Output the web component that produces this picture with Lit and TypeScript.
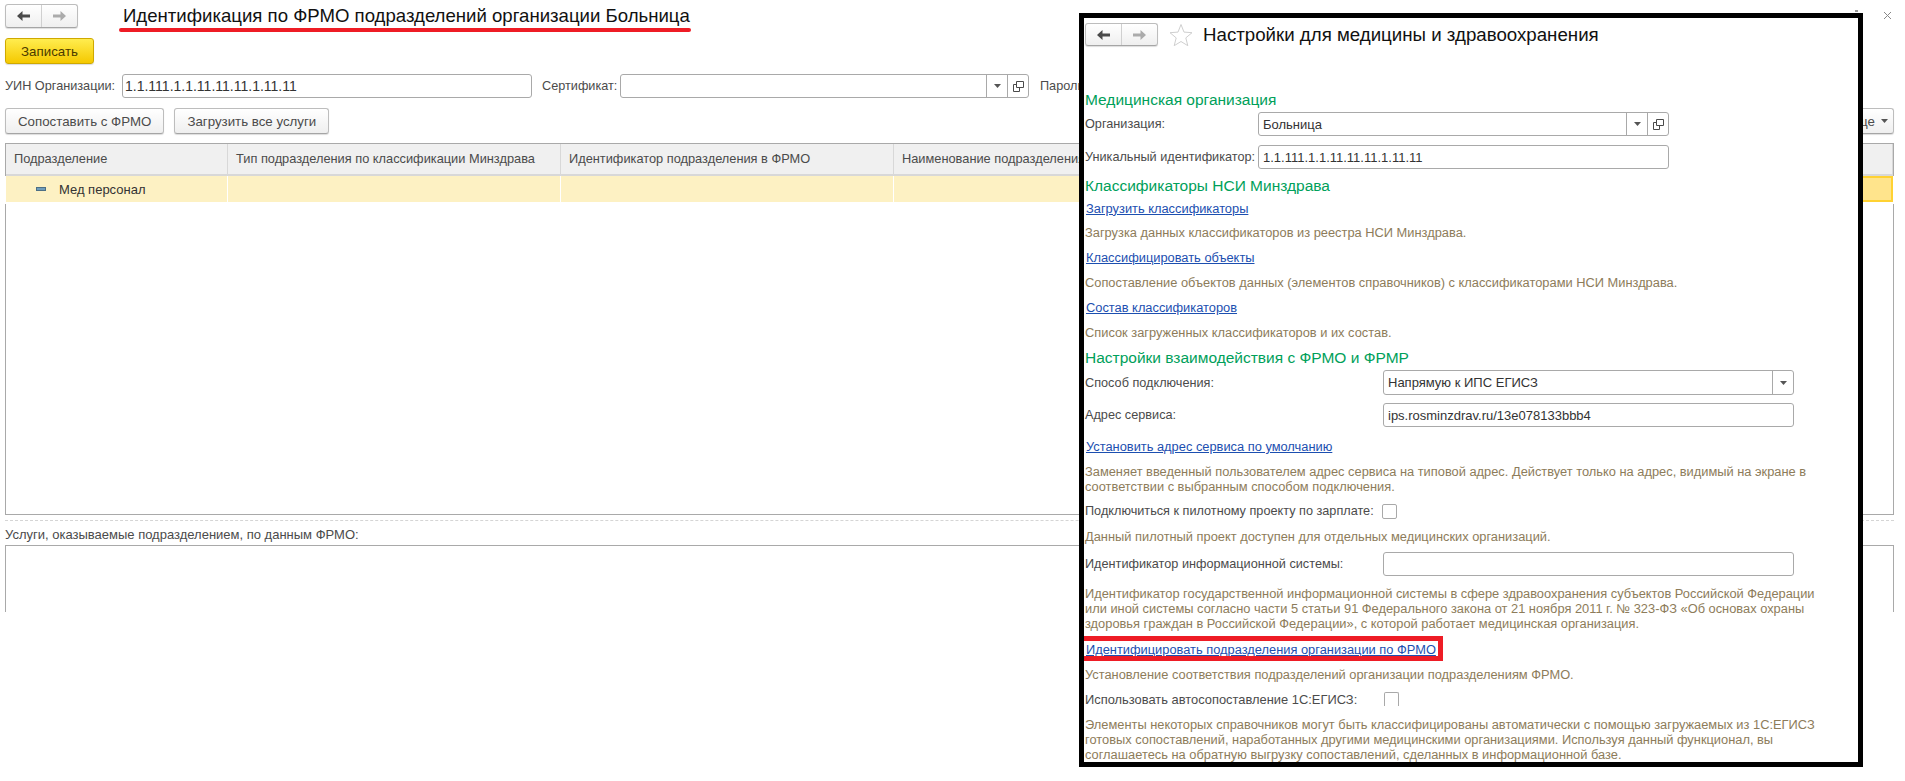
import { LitElement, html, css } from 'lit'
import { customElement } from 'lit/decorators.js'

const arrowLeft = html`<svg width="15" height="12" viewBox="0 0 15 12"><path d="M1 6l5.500-5v3.500H14v3H6.500V11z" fill="#4a4a4a"/></svg>`
const arrowRight = html`<svg width="15" height="12" viewBox="0 0 15 12"><path d="M14 6L8.500 1v3.500H1v3h7.500V11z" fill="#ababab"/></svg>`
const caret = html`<svg width="7" height="4" viewBox="0 0 7 4"><path d="M0 0h7L3.500 4z" fill="#555"/></svg>`
const openIcon = html`<svg width="11" height="11" viewBox="0 0 11 11" fill="none" stroke="#4a4a4a"><path d="M3.500.5h7v6h-7zM3.500 3.500H.5v7h6V7"/></svg>`
const star = html`<svg width="24" height="23" viewBox="0 0 24 23"><path d="M12 1.500l3 7.600 8 .6-6.200 5.200 2 7.800L12 18.500 5.200 22.700l2-7.800L1 9.700l8-.6z" fill="#fff" stroke="#cfcfcf"/></svg>`

@customElement('app-root')
export class AppRoot extends LitElement {
  static styles = css`
    :host {
      display: block;
      position: relative;
      height: 781px;
      overflow: hidden;
      background: #fff;
      font-family: "Liberation Sans", Arial, sans-serif;
      font-size: 13px;
      color: #4b4b4b;
    }
    .form {
      display: flex;
      flex-direction: column;
      height: 612px;
      overflow: hidden;
      padding: 4px 11px 0 5px;
      box-sizing: border-box;
    }
    .form > * {
      flex: none;
    }
    .titlebar {
      display: flex;
      align-items: center;
      height: 24px;
    }
    .nav {
      display: flex;
      flex: none;
      box-sizing: border-box;
      width: 73px;
      height: 24px;
      border: 1px solid #bdbdbd;
      border-bottom-color: #a5a5a5;
      border-radius: 3px;
      background: linear-gradient(#fff, #efefef);
      box-shadow: 0 1px 1px #ddd;
    }
    .nav span {
      flex: 1;
      display: flex;
      align-items: center;
      justify-content: center;
    }
    .nav span + span {
      border-left: 1px solid #d0d0d0;
    }
    .title {
      position: relative;
      margin-left: 45px;
      font-size: 18.6px;
      color: #111;
      white-space: nowrap;
    }
    .title::after {
      content: "";
      position: absolute;
      left: -4px;
      right: -1px;
      bottom: -5px;
      height: 4px;
      border-radius: 2px;
      background: #ee1c25;
    }
    .kebab {
      position: absolute;
      left: 1855px;
      top: 10px;
      width: 3px;
      height: 10px;
      background: repeating-linear-gradient(#999 0 2px, transparent 2px 4px);
    }
    .close {
      position: absolute;
      left: 1883px;
      top: 11px;
    }
    .btn {
      display: flex;
      align-items: center;
      justify-content: center;
      box-sizing: border-box;
      height: 26px;
      padding: 0 12px;
      border: 1px solid #bdbdbd;
      border-bottom-color: #a5a5a5;
      border-radius: 3px;
      background: linear-gradient(#fff, #efefef);
      box-shadow: 0 1px 1px #ddd;
      white-space: nowrap;
      font-size: 13.3px;
    }
    .save {
      align-self: flex-start;
      margin-top: 10px;
      width: 89px;
      padding: 0;
      background: linear-gradient(#ffed4f, #f5c900);
      border-color: #cfa900;
      color: #4a3a00;
    }
    .fields {
      display: flex;
      align-items: center;
      height: 24px;
      margin-top: 10px;
      white-space: nowrap;
      font-size: 12.7px;
    }
    .uin-label {
      flex: none;
      width: 117px;
    }
    .cert-label {
      flex: none;
      width: 88px;
      padding-left: 10px;
      box-sizing: border-box;
    }
    .input {
      display: flex;
      align-items: stretch;
      box-sizing: border-box;
      height: 24px;
      border: 1px solid #a9a9a9;
      border-radius: 3px;
      background: #fff;
      color: #333;
      flex: none;
    }
    .input .val {
      flex: 1;
      display: flex;
      align-items: center;
      padding-left: 4px;
      white-space: nowrap;
      overflow: hidden;
    }
    .input .cell {
      flex: none;
      width: 20px;
      display: flex;
      align-items: center;
      justify-content: center;
      border-left: 1px solid #a9a9a9;
    }
    .uin {
      width: 410px;
      font-size: 14px;
    }
    .uin .val {
      padding-left: 2px;
    }
    .cert {
      width: 409px;
      margin-right: 11px;
    }
    .actions {
      display: flex;
      gap: 10px;
      margin-top: 10px;
    }
    .actions .more {
      margin-left: auto;
      gap: 6px;
      padding: 0 5px 0 8px;
    }
    .table {
      display: grid;
      grid-template-columns: 222px 333px 333px 500px 1fr;
      grid-template-rows: 32px 28px 1fr;
      box-sizing: border-box;
      height: 372px;
      margin-top: 9px;
      border: 1px solid #a9a9a9;
    }
    .th {
      display: flex;
      align-items: center;
      padding: 0 0 2px 8px;
      background: #f0f0f0;
      border-right: 1px solid #d8d8d8;
      border-bottom: 2px solid #d8d8d8;
      white-space: nowrap;
      overflow: hidden;
      font-size: 12.8px;
    }
    .td {
      display: flex;
      align-items: center;
      box-sizing: border-box;
      margin-bottom: 2px;
      background: #fdf1c3;
      border-right: 1px solid #fff;
      color: #333;
      box-shadow: 0 1px 0 1px #fff, 0 2px 0 0 #e6e6e6;
    }
    .td.first {
      padding-left: 30px;
      gap: 13px;
    }
    .td.current {
      background: #ffe48c;
      border: 2px solid #ffd233;
    }
    .minus {
      width: 10px;
      height: 4px;
      background: #6f9dbb;
      border: 1px solid #4d6f85;
      box-sizing: border-box;
    }
    .split {
      height: 0;
      margin-top: 5px;
      border-top: 1px dashed #d5d5d5;
    }
    .services {
      margin-top: 6px;
      line-height: 16px;
    }
    .lower {
      margin-top: 2px;
      height: 100px;
      border: 1px solid #a9a9a9;
    }

    /* настройки поверх формы */
    .window {
      position: absolute;
      left: 1079px;
      top: 13px;
      box-sizing: border-box;
      width: 784px;
      height: 754px;
      border: 5px solid #000;
      background: #fff;
      overflow: hidden;
      padding: 5px 0 0 1px;
      font-size: 12.85px;
    }
    .winhead {
      display: flex;
      align-items: center;
      height: 23px;
    }
    .winhead .nav {
      height: 23px;
    }
    .star {
      flex: none;
      margin-left: 11px;
      display: flex;
    }
    .wintitle {
      margin-left: 10px;
      font-size: 18.7px;
      color: #111;
      white-space: nowrap;
    }
    .group {
      display: flex;
      align-items: center;
      height: 22px;
      font-size: 15.5px;
      color: #00a05a;
      white-space: nowrap;
    }
    .row {
      display: flex;
      align-items: center;
      white-space: nowrap;
      font-size: 12.7px;
    }
    .row .lbl {
      flex: none;
      width: 173px;
    }
    .row.wide .lbl {
      width: 298px;
    }
    .row .input {
      width: 411px;
      font-size: 13px;
    }
    .row.auto {
      font-size: 12.9px;
    }
    .row.auto .lbl {
      width: 299px;
    }
    .h24 { height: 24px; }
    .h25 { height: 25px; }
    .link {
      display: flex;
      align-items: center;
      height: 25px;
      padding-left: 1px;
      color: #1c4fb0;
      text-decoration: underline;
      white-space: nowrap;
    }
    .link.short {
      height: 22px;
      margin-bottom: 1px;
    }
    .desc {
      padding: 5px 0;
      line-height: 15px;
      color: #8d7c5a;
      white-space: nowrap;
    }
    .check {
      flex: none;
      box-sizing: border-box;
      width: 15px;
      height: 15px;
      border: 1px solid #a9a9a9;
      border-radius: 2px;
      background: #fff;
    }
    .check.near {
      margin-left: 8px;
    }
    .check.open {
      height: 14px;
      border-bottom: none;
      border-radius: 2px 2px 0 0;
    }
    .gap1 { margin-top: 1px; }
    .gap2 { margin-top: 2px; }
    .gap3 { margin-top: 3px; }
    .gap5 { margin-top: 5px; }
    .gap6 { margin-top: 6px; }
    .gap7 { margin-top: 7px; }
    .gap8 { margin-top: 8px; }
    .gap9 { margin-top: 9px; }
    .gap43 { margin-top: 43px; }
    .mark {
      position: absolute;
      left: -5px;
      top: 618px;
      box-sizing: border-box;
      width: 364px;
      height: 25px;
      border: 5px solid #ee1c25;
    }
  `

  protected override render() {
    return html`
      <div class="form">
        <div class="titlebar">
          <div class="nav"><span>${arrowLeft}</span><span>${arrowRight}</span></div>
          <div class="title">Идентификация по ФРМО подразделений организации Больница</div>
        </div>
        <div class="kebab"></div>
        <svg class="close" width="9" height="9" viewBox="0 0 9 9" stroke="#888"><path d="M1 1l7 7M8 1L1 8"/></svg>
        <div class="btn save">Записать</div>
        <div class="fields">
          <span class="uin-label">УИН Организации:</span>
          <div class="input uin"><span class="val">1.1.111.1.1.11.11.11.1.11.11</span></div>
          <span class="cert-label">Сертификат:</span>
          <div class="input cert">
            <span class="val"></span><span class="cell">${caret}</span><span class="cell">${openIcon}</span>
          </div>
          <span>Пароль:</span>
        </div>
        <div class="actions">
          <div class="btn">Сопоставить с ФРМО</div>
          <div class="btn">Загрузить все услуги</div>
          <div class="btn more">Еще ${caret}</div>
        </div>
        <div class="table">
          <div class="th">Подразделение</div>
          <div class="th">Тип подразделения по классификации Минздрава</div>
          <div class="th">Идентификатор подразделения в ФРМО</div>
          <div class="th">Наименование подразделения в ФРМО</div>
          <div class="th"></div>
          <div class="td first"><span class="minus"></span>Мед персонал</div>
          <div class="td"></div>
          <div class="td"></div>
          <div class="td"></div>
          <div class="td current"></div>
        </div>
        <div class="split"></div>
        <div class="services">Услуги, оказываемые подразделением, по данным ФРМО:</div>
        <div class="lower"></div>
      </div>

      <div class="window">
        <div class="winhead">
          <div class="nav"><span>${arrowLeft}</span><span>${arrowRight}</span></div>
          <span class="star">${star}</span>
          <span class="wintitle">Настройки для медицины и здравоохранения</span>
        </div>

        <div class="group gap43">Медицинская организация</div>
        <div class="row h24 gap1">
          <span class="lbl">Организация:</span>
          <div class="input">
            <span class="val">Больница</span><span class="cell">${caret}</span><span class="cell">${openIcon}</span>
          </div>
        </div>
        <div class="row h24 gap9">
          <span class="lbl">Уникальный идентификатор:</span>
          <div class="input"><span class="val">1.1.111.1.1.11.11.11.1.11.11</span></div>
        </div>
        <div class="group gap6">Классификаторы НСИ Минздрава</div>

        <div class="link short">Загрузить классификаторы</div>
        <div class="desc">Загрузка данных классификаторов из реестра НСИ Минздрава.</div>
        <div class="link">Классифицировать объекты</div>
        <div class="desc">Сопоставление объектов данных (элементов справочников) с классификаторами НСИ Минздрава.</div>
        <div class="link">Состав классификаторов</div>
        <div class="desc">Список загруженных классификаторов и их состав.</div>
        <div class="group gap2">Настройки взаимодействия с ФРМО и ФРМР</div>

        <div class="row wide h25 gap1">
          <span class="lbl">Способ подключения:</span>
          <div class="input h25"><span class="val">Напрямую к ИПС ЕГИСЗ</span><span class="cell">${caret}</span></div>
        </div>
        <div class="row wide h24 gap8">
          <span class="lbl">Адрес сервиса:</span>
          <div class="input"><span class="val">ips.rosminzdrav.ru/13e078133bbb4</span></div>
        </div>
        <div class="link gap7">Установить адрес сервиса по умолчанию</div>
        <div class="desc">
          Заменяет введенный пользователем адрес сервиса на типовой адрес. Действует только на адрес, видимый на экране в<br>
          соответствии с выбранным способом подключения.
        </div>
        <div class="row h24">
          <span>Подключиться к пилотному проекту по зарплате:</span>
          <span class="check near"></span>
        </div>
        <div class="desc gap1">Данный пилотный проект доступен для отдельных медицинских организаций.</div>
        <div class="row wide h24 gap3">
          <span class="lbl">Идентификатор информационной системы:</span>
          <div class="input"></div>
        </div>
        <div class="desc gap5">
          Идентификатор государственной информационной системы в сфере здравоохранения субъектов Российской Федерации<br>
          или иной системы согласно части 5 статьи 91 Федерального закона от 21 ноября 2011 г. № 323-ФЗ «Об основах охраны<br>
          здоровья граждан в Российской Федерации», с которой работает медицинская организация.
        </div>
        <div class="link gap1">Идентифицировать подразделения организации по ФРМО</div>
        <div class="desc">Установление соответствия подразделений организации подразделениям ФРМО.</div>
        <div class="row auto h24">
          <span class="lbl">Использовать автосопоставление 1С:ЕГИСЗ:</span>
          <span class="check open"></span>
        </div>
        <div class="desc gap1">
          Элементы некоторых справочников могут быть классифицированы автоматически с помощью загружаемых из 1С:ЕГИСЗ<br>
          готовых сопоставлений, наработанных другими медицинскими организациями. Используя данный функционал, вы<br>
          соглашаетесь на обратную выгрузку сопоставлений, сделанных в информационной базе.
        </div>
        <div class="mark"></div>
      </div>
    `
  }
}

declare global {
  interface HTMLElementTagNameMap {
    'app-root': AppRoot
  }
}
